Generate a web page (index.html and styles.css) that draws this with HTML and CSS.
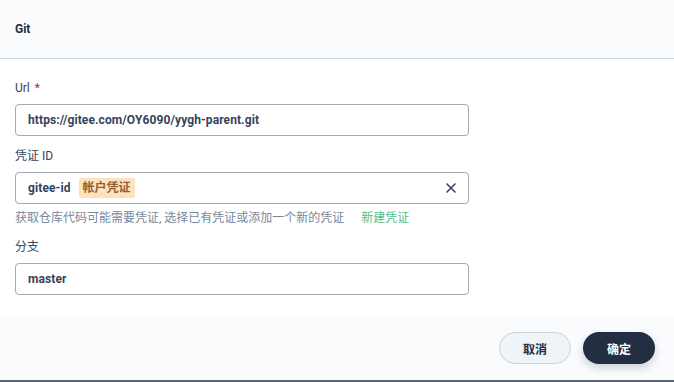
FILE: index.html
```html
<!DOCTYPE html>
<html lang="zh-CN">
<head>
    <meta charset="UTF-8">
    <title>Git</title>
    <link rel="stylesheet" href="styles.css">
</head>
<body>
    <div class="dialog">
        <div class="dialog-header">Git</div>
        <div class="dialog-body">
            <div class="field">
                <label class="field-label">Url <span class="required">*</span></label>
                <div class="input">https://gitee.com/OY6090/yygh-parent.git</div>
            </div>
            <div class="field">
                <label class="field-label">凭证 ID</label>
                <div class="input select">
                    <span class="value">gitee-id</span>
                    <span class="tag">帐户凭证</span>
                    <span class="clear">
                        <svg width="12" height="12" viewBox="0 0 12 12"><path d="M2 2L10 10M10 2L2 10" stroke="#36435c" stroke-width="1.6" stroke-linecap="round"/></svg>
                    </span>
                </div>
                <div class="hint">获取仓库代码可能需要凭证, 选择已有凭证或添加一个新的凭证 <a class="link">新建凭证</a></div>
            </div>
            <div class="field">
                <label class="field-label">分支</label>
                <div class="input">master</div>
            </div>
        </div>
        <div class="dialog-footer">
            <button class="btn btn-cancel">取消</button>
            <button class="btn btn-ok">确定</button>
        </div>
    </div>
    <div class="backdrop-strip"></div>
</body>
</html>
```

FILE: styles.css
```css
body { margin: 0; font-family: Roboto, "Noto Sans CJK SC", sans-serif; color: #36435c; background: #fff; width: 674px; height: 382px; overflow: hidden; }
.dialog { display: flex; flex-direction: column; height: 380px; }
.dialog-header { height: 59px; box-sizing: border-box; padding: 0 15px; display: flex; align-items: center; background: #f9fbfd; border-bottom: 1px solid #ccd3db; font-size: 12px; font-weight: bold; color: #242e42; }
.dialog-body { flex: 1; padding: 20px 205px 0 15px; background: #fff; }
.field { margin-bottom: 11px; }
.field-label { display: block; font-size: 12px; color: #36435c; line-height: 18px; margin-bottom: 7px; }
.required { color: #ca2621; margin-left: 2px; }
.input { height: 32px; box-sizing: border-box; border: 1px solid #a1abb8; border-radius: 4px; padding: 0 12px; display: flex; align-items: center; font-size: 12px; font-weight: bold; color: #36435c; letter-spacing: 0.1px; }
.select .value { margin-right: 8px; }
.tag { background: #ffe1be; color: #8d6137; padding: 0 4px; border-radius: 2px; line-height: 20px; letter-spacing: 0; }
.clear { margin-left: auto; display: flex; margin-right: -1px; }
.hint { font-size: 12px; color: #79879c; line-height: 18px; margin-top: 5px; margin-bottom: 1px; }
.link { color: #55bc8a; margin-left: 14px; }
.dialog-footer { height: 64px; background: #f9fbfd; display: flex; justify-content: flex-end; align-items: center; gap: 12px; padding: 0 19px; }
.btn { width: 72px; height: 32px; border-radius: 16px; font-family: inherit; font-size: 12px; font-weight: bold; border: 1px solid transparent; cursor: pointer; }
.btn-cancel { background: #eff4f9; border-color: #ccd3db; color: #242e42; }
.btn-ok { background: #242e42; color: #fff; box-shadow: 0 4px 8px rgba(36, 46, 66, 0.2); }
.backdrop-strip { height: 2px; background: #5a6270; }
```
